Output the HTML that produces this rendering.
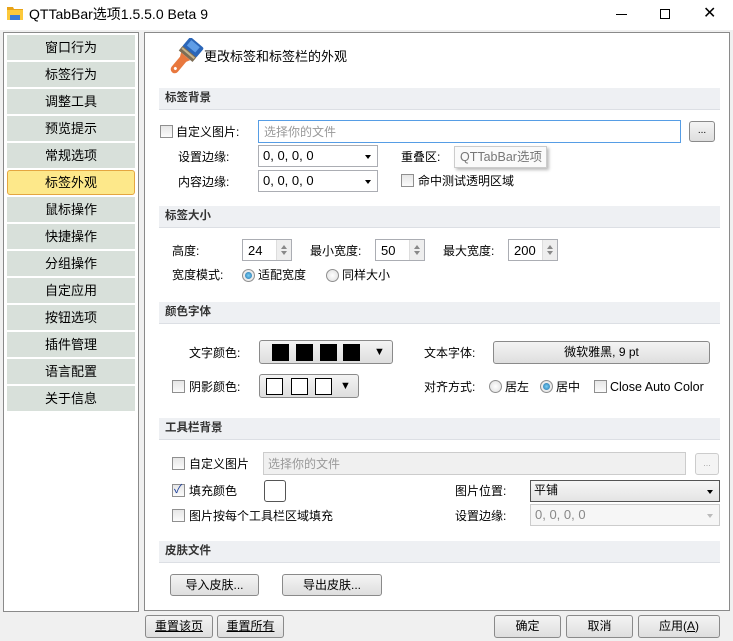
<!DOCTYPE html>
<html><head><meta charset="utf-8"><style>
*{box-sizing:border-box;margin:0;padding:0}
body{width:733px;height:641px;background:#f0f0f0;font-family:"Liberation Sans","Noto Sans CJK SC","Microsoft YaHei",sans-serif;font-size:12px;color:#000;position:relative;overflow:hidden}
.a{position:absolute}
.t{position:absolute;white-space:nowrap;line-height:16px}
.item{position:absolute;left:7px;width:128px;height:25px;background:#d8e0da;text-align:center;line-height:25px;font-size:13px}
.sel{background:#fde88a;border:1px solid #e4a640;border-radius:3px;line-height:23px}
.hdr{position:absolute;left:159px;width:561px;height:22px;background:#eef0f3;border-bottom:1px solid #dcdfe4;font-weight:bold;font-size:11.5px;color:#333;padding-left:6px;line-height:21px}
.cb{position:absolute;width:13px;height:13px;border:1px solid #8f8f8f;background:linear-gradient(#e6e6e6,#fbfbfb)}
.rd{position:absolute;width:13px;height:13px;border:1px solid #8f8f8f;border-radius:50%;background:radial-gradient(#fff,#ddd)}
.rd.on::after{content:"";position:absolute;left:2px;top:2px;width:7px;height:7px;border-radius:50%;background:radial-gradient(#7cd0f5,#1d6ea8)}
.box{position:absolute;background:#fff;border:1px solid #abadb3}
.btn{position:absolute;border:1px solid #8a8a8a;border-radius:3px;background:linear-gradient(#f4f4f4,#dedede);text-align:center;font-size:12px}
.dd::after{content:"";position:absolute;right:6px;top:9px;border-left:3.5px solid transparent;border-right:3.5px solid transparent;border-top:4px solid #000}
.sp{position:absolute;right:0;top:0;width:15px;height:100%;background:#eee;border-left:1px solid #ddd}
.sp::before{content:"";position:absolute;left:4px;top:5px;border-left:3px solid transparent;border-right:3px solid transparent;border-bottom:4px solid #888}
.sp::after{content:"";position:absolute;left:4px;bottom:5px;border-left:3px solid transparent;border-right:3px solid transparent;border-top:4px solid #888}
.sw{position:absolute;width:17px;height:17px;background:#000}
.sww{position:absolute;width:17px;height:17px;border:1px solid #000;background:#fff}
</style></head><body>
<div class="a" style="left:0;top:0;width:733px;height:30px;background:#fff"></div>
<svg class="a" style="left:7px;top:6px" width="16" height="14" viewBox="0 0 16 14"><path d="M0 1h6l1 2h9v11H0z" fill="#e8a317"/><path d="M0 4h16v10H0z" fill="#fcc93b"/><rect x="3" y="9" width="10" height="5" fill="#3a7bd5"/></svg>
<div class="t" style="left:29px;top:6px;font-size:14px">QTTabBar选项1.5.5.0 Beta 9</div>
<div class="a" style="left:616px;top:14px;width:11px;height:1px;background:#000"></div>
<div class="a" style="left:660px;top:9px;width:10px;height:10px;border:1px solid #000"></div>
<div class="t" style="left:703px;top:5px;font-size:16px;font-family:'DejaVu Sans'">✕</div>

<div class="a" style="left:3px;top:32px;width:136px;height:580px;background:#fff;border:1px solid #8a8a8a"></div>
<div class="item" style="top:35px">窗口行为</div>
<div class="item" style="top:62px">标签行为</div>
<div class="item" style="top:89px">调整工具</div>
<div class="item" style="top:116px">预览提示</div>
<div class="item" style="top:143px">常规选项</div>
<div class="item sel" style="top:170px">标签外观</div>
<div class="item" style="top:197px">鼠标操作</div>
<div class="item" style="top:224px">快捷操作</div>
<div class="item" style="top:251px">分组操作</div>
<div class="item" style="top:278px">自定应用</div>
<div class="item" style="top:305px">按钮选项</div>
<div class="item" style="top:332px">插件管理</div>
<div class="item" style="top:359px">语言配置</div>
<div class="item" style="top:386px">关于信息</div>

<div class="a" style="left:144px;top:32px;width:586px;height:579px;background:#fff;border:1px solid #8a8a8a"></div>
<svg class="a" style="left:162px;top:38px" width="42" height="38" viewBox="0 0 42 38">
<g transform="translate(23,19) rotate(40)">
<rect x="-9" y="-19" width="18" height="13" rx="2" fill="#2b66b8"/>
<rect x="-6" y="-17" width="11" height="7" fill="#5f9de6"/>
<rect x="-9" y="-7" width="18" height="6" fill="#7d6d55"/>
<rect x="-8" y="-6" width="16" height="2" fill="#c6b48c"/>
<path d="M-6 -1h12l-2 4v13a4 4 0 0 1-8 0V3z" fill="#e8783e"/>
<circle cx="0" cy="15" r="1.5" fill="#fff"/>
</g>
</svg>
<div class="t" style="left:204px;top:49px;font-size:13px">更改标签和标签栏的外观</div>

<div class="hdr" style="top:88px">标签背景</div>
<div class="cb" style="left:160px;top:125px"></div>
<div class="t" style="left:176px;top:124px">自定义图片:</div>
<div class="box" style="left:258px;top:120px;width:423px;height:23px;border-color:#569de5"></div>
<div class="t" style="left:264px;top:124px;color:#999">选择你的文件</div>
<div class="btn" style="left:689px;top:121px;width:26px;height:21px;line-height:17px;font-size:10px">...</div>
<div class="t" style="left:178px;top:149px">设置边缘:</div>
<div class="box dd" style="left:258px;top:145px;width:120px;height:22px"></div>
<div class="t" style="left:263px;top:148px;font-size:13px">0, 0, 0, 0</div>
<div class="t" style="left:178px;top:174px">内容边缘:</div>
<div class="box dd" style="left:258px;top:170px;width:120px;height:22px"></div>
<div class="t" style="left:263px;top:173px;font-size:13px">0, 0, 0, 0</div>
<div class="t" style="left:401px;top:149px">重叠区:</div>
<div class="a" style="left:454px;top:146px;width:93px;height:22px;background:#fafafa;border:1px solid #ccc;box-shadow:2px 2px 3px #bbb"></div>
<div class="t" style="left:460px;top:149px;color:#777;font-size:12.5px">QTTabBar选项</div>
<div class="cb" style="left:401px;top:174px"></div>
<div class="t" style="left:418px;top:173px">命中测试透明区域</div>

<div class="hdr" style="top:206px">标签大小</div>
<div class="t" style="left:172px;top:243px">高度:</div>
<div class="box" style="left:242px;top:239px;width:50px;height:22px"><div class="sp"></div></div>
<div class="t" style="left:248px;top:243px;font-size:13px">24</div>
<div class="t" style="left:310px;top:243px">最小宽度:</div>
<div class="box" style="left:375px;top:239px;width:50px;height:22px"><div class="sp"></div></div>
<div class="t" style="left:381px;top:243px;font-size:13px">50</div>
<div class="t" style="left:443px;top:243px">最大宽度:</div>
<div class="box" style="left:508px;top:239px;width:50px;height:22px"><div class="sp"></div></div>
<div class="t" style="left:514px;top:243px;font-size:13px">200</div>
<div class="t" style="left:172px;top:267px">宽度模式:</div>
<div class="rd on" style="left:242px;top:269px"></div>
<div class="t" style="left:258px;top:267px">适配宽度</div>
<div class="rd" style="left:326px;top:269px"></div>
<div class="t" style="left:342px;top:267px">同样大小</div>

<div class="hdr" style="top:302px">颜色字体</div>
<div class="t" style="left:189px;top:345px">文字颜色:</div>
<div class="btn" style="left:259px;top:340px;width:134px;height:24px"></div>
<div class="sw" style="left:272px;top:344px"></div><div class="sw" style="left:296px;top:344px"></div><div class="sw" style="left:320px;top:344px"></div><div class="sw" style="left:343px;top:344px"></div>
<div class="t" style="left:374px;top:344px;font-size:11px">▼</div>
<div class="cb" style="left:172px;top:380px"></div>
<div class="t" style="left:189px;top:379px">阴影颜色:</div>
<div class="btn" style="left:259px;top:374px;width:100px;height:24px"></div>
<div class="sww" style="left:266px;top:378px"></div><div class="sww" style="left:291px;top:378px"></div><div class="sww" style="left:315px;top:378px"></div>
<div class="t" style="left:340px;top:378px;font-size:11px">▼</div>
<div class="t" style="left:424px;top:345px">文本字体:</div>
<div class="btn" style="left:493px;top:341px;width:217px;height:23px;line-height:21px">微软雅黑, 9 pt</div>
<div class="t" style="left:424px;top:379px">对齐方式:</div>
<div class="rd" style="left:489px;top:380px"></div>
<div class="t" style="left:505px;top:379px">居左</div>
<div class="rd on" style="left:540px;top:380px"></div>
<div class="t" style="left:556px;top:379px">居中</div>
<div class="cb" style="left:594px;top:380px"></div>
<div class="t" style="left:610px;top:379px;font-size:12.5px">Close Auto Color</div>

<div class="hdr" style="top:418px">工具栏背景</div>
<div class="cb" style="left:172px;top:457px"></div>
<div class="t" style="left:189px;top:456px">自定义图片</div>
<div class="a" style="left:263px;top:452px;width:423px;height:23px;background:#f0f0f0;border:1px solid #ccc"></div>
<div class="t" style="left:268px;top:456px;color:#999">选择你的文件</div>
<div class="a" style="left:695px;top:453px;width:24px;height:22px;border:1px solid #ccc;border-radius:3px;background:#f4f4f4;color:#aaa;font-size:9px;text-align:center;line-height:18px">...</div>
<div class="cb" style="left:172px;top:484px"></div>
<div class="t" style="left:174px;top:481px;color:#1b3e9a;font-size:12px">✓</div>
<div class="t" style="left:189px;top:483px">填充颜色</div>
<div class="a" style="left:264px;top:480px;width:22px;height:22px;border:1px solid #555;border-radius:3px;background:#fff"></div>
<div class="t" style="left:455px;top:483px">图片位置:</div>
<div class="box dd" style="left:530px;top:480px;width:190px;height:22px;border-color:#555;background:linear-gradient(#f6f6f6,#e4e4e4)"></div>
<div class="t" style="left:534px;top:482px">平铺</div>
<div class="cb" style="left:172px;top:509px"></div>
<div class="t" style="left:189px;top:508px">图片按每个工具栏区域填充</div>
<div class="t" style="left:455px;top:508px">设置边缘:</div>
<div class="a" style="left:530px;top:504px;width:190px;height:22px;border:1px solid #ccc;background:#f6f6f6"></div>
<div class="t" style="left:535px;top:507px;color:#888;font-size:13px">0, 0, 0, 0</div>
<div class="a" style="left:707px;top:514px;border-left:3.5px solid transparent;border-right:3.5px solid transparent;border-top:4px solid #bbb"></div>

<div class="hdr" style="top:541px">皮肤文件</div>
<div class="btn" style="left:170px;top:574px;width:89px;height:22px;line-height:20px">导入皮肤...</div>
<div class="btn" style="left:282px;top:574px;width:100px;height:22px;line-height:20px">导出皮肤...</div>

<div class="btn" style="left:145px;top:615px;width:68px;height:23px;line-height:21px"><u>重置该页</u></div>
<div class="btn" style="left:217px;top:615px;width:67px;height:23px;line-height:21px"><u>重置所有</u></div>
<div class="btn" style="left:494px;top:615px;width:67px;height:23px;line-height:21px">确定</div>
<div class="btn" style="left:566px;top:615px;width:67px;height:23px;line-height:21px">取消</div>
<div class="btn" style="left:638px;top:615px;width:82px;height:23px;line-height:21px">应用(<u>A</u>)</div>
</body></html>
